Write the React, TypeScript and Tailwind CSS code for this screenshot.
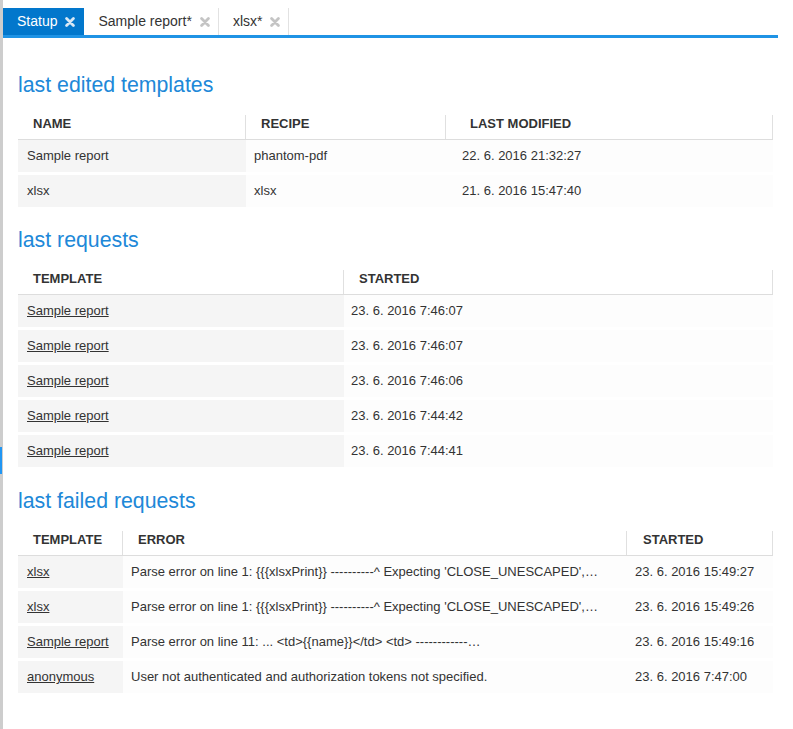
import React from "react";

function XIcon({ className }: { className: string }) {
  return (
    <svg width="10" height="10" viewBox="0 0 10 10" className={className}>
      <path d="M1.6 1.6 L8.4 8.4 M8.4 1.6 L1.6 8.4" stroke="currentColor" strokeWidth="2.8" strokeLinecap="round" />
    </svg>
  );
}

function Tab({ label, active }: { label: string; active?: boolean }) {
  return (
    <div
      className={
        active
          ? "flex h-[27px] items-center gap-[8px] border-r border-[#0277cc] bg-[#0277cc] pl-[14px] pr-[8px] text-[14px] text-white"
          : "flex h-[27px] items-center gap-[8px] border-r border-[#e2e2e2] pl-[14px] pr-[8px] text-[14px] text-[#333]"
      }
    >
      <span>{label}</span>
      <XIcon className={active ? "text-[#d8e8f5]" : "text-[#c4c4c4]"} />
    </div>
  );
}

type Col = { title: string; w: string; hp: string; bp: string };

function DataTable({ cols, rows }: { cols: Col[]; rows: React.ReactNode[][] }) {
  return (
    <div className="mt-[18px] w-[755px]">
      <div className="flex h-[25px] border-b border-[#dddddd]">
        {cols.map((c, i) => (
          <div key={i} className={`${c.w} ${c.hp} h-[24px] border-r border-[#e0e0e0] font-bold leading-[18px] text-[#333]`}>
            {c.title}
          </div>
        ))}
      </div>
      <div className="flex flex-col gap-[3px]">
        {rows.map((r, ri) => (
          <div key={ri} className="flex h-[32px]">
            {r.map((cell, ci) => (
              <div
                key={ci}
                className={`${cols[ci].w} ${cols[ci].bp} flex items-center whitespace-nowrap overflow-hidden ${
                  ci === 0 ? "bg-[#f5f5f5]" : "bg-[#fdfdfd]"
                }`}
              >
                {cell}
              </div>
            ))}
          </div>
        ))}
      </div>
    </div>
  );
}

function L({ children }: { children: React.ReactNode }) {
  return <span className="underline text-[#333]">{children}</span>;
}

export default function App() {
  const sr = <L>Sample report</L>;
  return (
    <div className="flex h-[729px] bg-white font-['Liberation_Sans',Arial,sans-serif] text-[13px] text-[#333]">
      <div className="relative w-[3px] shrink-0 bg-[#cdcdcd]">
        <div className="absolute left-0 top-[447px] h-[27px] w-[2px] bg-[#2196f3]" />
      </div>
      <div className="flex w-[775px] flex-col">
        <div className="mt-[8px] flex border-b-[3px] border-[#1f93e5]">
          <Tab label="Statup" active />
          <Tab label="Sample report*" />
          <Tab label="xlsx*" />
        </div>
        <div className="pl-[15px] pr-[5px] pt-[35px]">
          <h2 className="h-[24px] text-[21.3px] leading-[24px] text-[#2088d8]">last edited templates</h2>
          <DataTable
            cols={[
              { title: "NAME", w: "w-[228px]", hp: "pl-[15px]", bp: "pl-[9px]" },
              { title: "RECIPE", w: "w-[200px]", hp: "pl-[15px]", bp: "pl-[8px]" },
              { title: "LAST MODIFIED", w: "w-[327px]", hp: "pl-[24px]", bp: "pl-[16px]" },
            ]}
            rows={[
              ["Sample report", "phantom-pdf", "22. 6. 2016 21:32:27"],
              ["xlsx", "xlsx", "21. 6. 2016 15:47:40"],
            ]}
          />
          <h2 className="mt-[21px] h-[24px] text-[21.3px] leading-[24px] text-[#2088d8]">last requests</h2>
          <DataTable
            cols={[
              { title: "TEMPLATE", w: "w-[326px]", hp: "pl-[15px]", bp: "pl-[9px]" },
              { title: "STARTED", w: "w-[429px]", hp: "pl-[15px]", bp: "pl-[7px]" },
            ]}
            rows={[
              [sr, "23. 6. 2016 7:46:07"],
              [sr, "23. 6. 2016 7:46:07"],
              [sr, "23. 6. 2016 7:46:06"],
              [sr, "23. 6. 2016 7:44:42"],
              [sr, "23. 6. 2016 7:44:41"],
            ]}
          />
          <h2 className="mt-[22px] h-[24px] text-[21.3px] leading-[24px] text-[#2088d8]">last failed requests</h2>
          <DataTable
            cols={[
              { title: "TEMPLATE", w: "w-[105px]", hp: "pl-[15px]", bp: "pl-[9px]" },
              { title: "ERROR", w: "w-[504px]", hp: "pl-[15px]", bp: "pl-[8px]" },
              { title: "STARTED", w: "w-[146px]", hp: "pl-[16px]", bp: "pl-[8px]" },
            ]}
            rows={[
              [<L>xlsx</L>, "Parse error on line 1: {{{xlsxPrint}} ----------^ Expecting 'CLOSE_UNESCAPED',…", "23. 6. 2016 15:49:27"],
              [<L>xlsx</L>, "Parse error on line 1: {{{xlsxPrint}} ----------^ Expecting 'CLOSE_UNESCAPED',…", "23. 6. 2016 15:49:26"],
              [sr, "Parse error on line 11: ... <td>{{name}}</td> <td> ------------…", "23. 6. 2016 15:49:16"],
              [<L>anonymous</L>, "User not authenticated and authorization tokens not specified.", "23. 6. 2016 7:47:00"],
            ]}
          />
        </div>
      </div>
    </div>
  );
}
